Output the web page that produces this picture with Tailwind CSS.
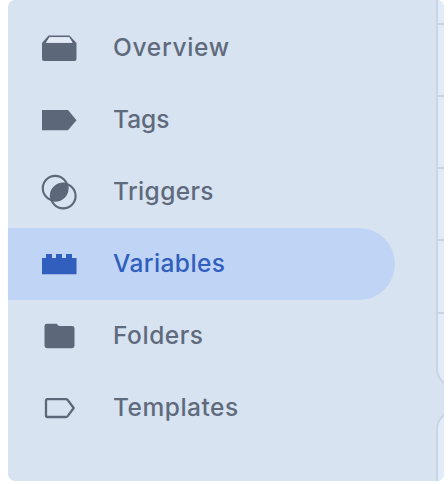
<!DOCTYPE html>
<html lang="en">
<head>
<meta charset="utf-8">
<title>Workspace</title>
<script src="https://cdn.jsdelivr.net/npm/@tailwindcss/browser@4"></script>
</head>
<body class="bg-white w-[448px] h-[484px] overflow-hidden font-['Inter',sans-serif] text-[24.5px] font-[460] text-[#5f6a7c]">
<div class="ml-2 flex w-[436px] h-[481px] justify-between overflow-hidden rounded-[7px] bg-[#d7e3f1]">
  <nav class="w-[386.5px] pt-[11.5px]">
    <a class="flex h-[72px] items-center pl-[33px]">
      <svg class="w-9 h-9 shrink-0" viewBox="0 0 36 36" fill="#5c6779"><path fill-rule="evenodd" d="M7.5 5.5H28.5L35.5 13V29Q35.5 31 33.5 31H3Q1 31 1 29V13ZM8.5 7.3L5 12.7H31.5L28.2 7.3Z"/><path fill="#e3ebf6" d="M8.5 7.3H28.2L31.5 12.7H5Z"/></svg>
      <span class="ml-[36px] leading-none tracking-[0.7px]">Overview</span>
    </a>
    <a class="flex h-[72px] items-center pl-[33px]">
      <svg class="w-9 h-9 shrink-0" viewBox="0 0 36 36" fill="#5c6779"><path d="M1 8H27L35.5 18.2L27 28.3H1Z"/></svg>
      <span class="ml-[36px] leading-none tracking-[-0.05px]">Tags</span>
    </a>
    <a class="flex h-[72px] items-center pl-[33px]">
      <svg class="w-9 h-9 shrink-0" viewBox="0 0 36 36" fill="none" stroke="#5c6779" stroke-width="2.1"><circle cx="14.2" cy="14.3" r="12.4"/><circle cx="22.2" cy="22" r="12.4"/><path fill="#5c6779" stroke="none" d="M25.9 10.2A12.4 12.4 0 0 0 10.5 26.1A12.4 12.4 0 0 0 25.9 10.2Z"/></svg>
      <span class="ml-[36px] leading-none tracking-[0.35px]">Triggers</span>
    </a>
    <a class="flex h-[72px] items-center rounded-r-full bg-[#c0d4f5] pl-[33px] text-[#315fbd]">
      <svg class="w-9 h-9 shrink-0" viewBox="0 0 36 36" fill="#315fbd"><path d="M1 12H5V8H11V12H15V8H21V12H25V8H31V12H35.5V28.3H1Z"/></svg>
      <span class="ml-[36px] leading-none tracking-[0.4px]">Variables</span>
    </a>
    <a class="flex h-[72px] items-center pl-[33px]">
      <svg class="w-9 h-9 shrink-0" viewBox="0 0 36 36" fill="#5c6779"><path d="M6 5.8H15.5L18 8H31Q33.5 8 33.5 10.5V27.8Q33.5 30.2 31 30.2H6Q3.5 30.2 3.5 27.8V8Q3.5 5.8 6 5.8Z"/></svg>
      <span class="ml-[36px] leading-none tracking-[0.55px]">Folders</span>
    </a>
    <a class="flex h-[72px] items-center pl-[33px]">
      <svg class="w-9 h-9 shrink-0" viewBox="0 0 36 36" fill="none" stroke="#5c6779" stroke-width="2.3" stroke-linejoin="round"><path d="M6.5 9.1H24.8Q26 9.1 26.7 10L32.7 18L26.7 26.1Q26 27 24.8 27H6.5Q5 27 5 25.5V10.6Q5 9.1 6.5 9.1Z"/></svg>
      <span class="ml-[36px] leading-none tracking-[0.5px]">Templates</span>
    </a>
  </nav>
  <div class="w-2 shrink-0">
    <div class="h-[387px] w-20 rounded-bl-[18px] border-b-2 border-l-2 border-[#c9d5e4] bg-[#e1ecfa] overflow-hidden">
      <div class="h-[25px] border-b-2 border-[#c9d5e4]"></div>
      <div class="h-[72px] border-b-2 border-[#c9d5e4]"></div>
      <div class="h-[72px] border-b-2 border-[#c9d5e4]"></div>
      <div class="h-[72px] border-b-2 border-[#c9d5e4]"></div>
      <div class="h-[73px] border-b-2 border-[#c9d5e4]"></div>
    </div>
    <div class="mt-[24px] h-28 w-20 rounded-tl-[18px] border-l-2 border-t-2 border-[#c9d5e4] bg-[#e1ecfa]"></div>
  </div>
</div>
</body>
</html>
